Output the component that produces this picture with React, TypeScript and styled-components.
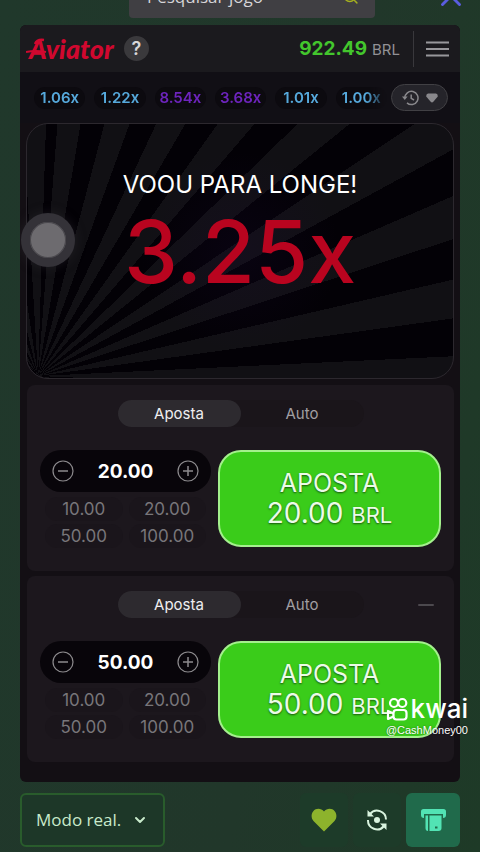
import React, { useState } from "react";
import styled, { createGlobalStyle } from "styled-components";
import { X, Search, ChevronDown } from "lucide-react";

const GlobalStyle = createGlobalStyle`
  *, *::before, *::after { box-sizing: border-box; }
  body {
    margin: 0;
    background: #20382a;
    font-family: Inter, "Liberation Sans", sans-serif;
    color: #fff;
  }
  button, input, select { font: inherit; color: inherit; }
  button { border: 0; padding: 0; background: none; cursor: pointer; }
`;

const Page = styled.div`
  position: relative;
  min-height: 100vh;
  overflow: hidden;
  display: flex;
  flex-direction: column;
  background: linear-gradient(100deg, #20382b, #21372a 60%, #1e3a27);
`;

const TopBar = styled.header`
  display: grid;
  grid-template-columns: 109px minmax(0, 1fr) 85px;
  align-content: end;
  align-items: center;
  height: 18px;
  margin: 0 20px 7px;
`;

const SearchBox = styled.label`
  grid-column: 2;
  display: flex;
  align-items: center;
  height: 44px;
  padding: 0 16px 0 18px;
  border-radius: 4px;
  background: #403f43;
  color: #a5b01f;
`;

const SearchInput = styled.input`
  flex: 1;
  min-width: 0;
  border: 0;
  padding: 0;
  background: none;
  font-family: "Open Sans", sans-serif;
  font-size: 17px;
  outline: 0;
  &::placeholder { color: #d6d5d8; opacity: 1; }
`;

const CloseButton = styled.button`
  justify-self: end;
  display: flex;
  margin-right: -8px;
  color: #5a5de0;
`;

const Game = styled.main`
  margin: 0 20px;
  padding-bottom: 20px;
  border-radius: 6px;
  background: #130f14;
  overflow: hidden;
`;

const GameHeader = styled.div`
  display: flex;
  align-items: center;
  height: 47px;
  padding: 0 11px 0 6px;
  background: #1b1a1e;
`;

const Logo = styled.h1`
  display: flex;
  align-items: center;
  position: relative;
  margin: 0;
  width: 88px;
  color: #d1082f;
  font-family: Lato, sans-serif;
  font-weight: 900;
  font-style: italic;
  font-size: 27px;
  line-height: 32px;
  padding-left: 3px;
`;

const LogoSwash = styled.svg`
  position: absolute;
  left: 0;
  top: 0;
`;

const HelpButton = styled.button`
  width: 25px;
  height: 25px;
  margin-left: 10px;
  border-radius: 50%;
  background: #3a393c;
  color: #d8d7d9;
  font-size: 18px;
  font-weight: 600;
  line-height: 24px;
`;

const Balance = styled.div`
  display: flex;
  align-items: baseline;
  gap: 5px;
  margin-left: auto;
  color: #929195;
  font-size: 15px;
`;

const BalanceAmount = styled.strong`
  color: #43c62d;
  font-size: 19px;
  font-weight: 700;
`;

const MenuButton = styled.button`
  display: flex;
  align-items: center;
  height: 36px;
  margin-left: 13px;
  padding-left: 12px;
  border-left: 1px solid #39383c;
  color: #98979b;
`;

const HistoryRow = styled.div`
  display: flex;
  align-items: center;
  gap: 4px;
  height: 51px;
  padding: 0 12px 0 14px;
  background: #110f15;
`;

const Multipliers = styled.ol`
  flex: 1;
  display: grid;
  grid-template-columns: repeat(6, 1fr);
  gap: 9px;
  margin: 0;
  padding: 0;
  list-style: none;
  mask-image: linear-gradient(90deg, #000 94%, transparent);
`;

const Multiplier = styled.li<{ $high?: boolean }>`
  display: flex;
  justify-content: center;
  border-radius: 11px;
  background: #0c0a0f;
  color: ${(p) => (p.$high ? "#6d24bd" : "#56a9dc")};
  font-size: 15px;
  font-weight: 600;
  line-height: 22px;
`;

const HistoryButton = styled.button`
  display: flex;
  align-items: center;
  justify-content: center;
  gap: 7px;
  width: 57px;
  height: 27px;
  border: 1px solid #414044;
  border-radius: 14px;
  background: #25242a;
  color: #89888c;
`;

const Stage = styled.section`
  display: flex;
  flex-direction: column;
  align-items: center;
  position: relative;
  height: 256px;
  margin: 0 6px;
  padding-top: 43px;
  border: 1px solid #2c282e;
  border-radius: 22px;
  background:
    radial-gradient(circle at 50% 50%, rgba(30, 10, 60, 0.2), transparent 40%),
    repeating-conic-gradient(from 4.4deg at 11px 252px, #111014 0 5.18deg, #030106 5.18deg 10.36deg);
`;

const StageTitle = styled.p`
  margin: 0;
  font-size: 24px;
  line-height: 36px;
`;

const StageValue = styled.p`
  margin: 0;
  color: #b9041f;
  font-size: 86px;
  font-weight: 500;
  line-height: 98px;
`;

const TouchDot = styled.button`
  position: absolute;
  left: -6px;
  top: 89px;
  width: 54px;
  height: 54px;
  border: 9px solid #343238;
  border-radius: 50%;
  background: #6d6b6f;
  box-shadow: inset 0 0 0 1px #4b494e, 0 0 12px rgba(60, 58, 64, 0.35);
`;

const BetPanel = styled.section`
  margin: 6px 6px 0 7px;
  padding: 15px 13px 23px;
  border-radius: 8px;
  background: #1c171d;
  & + & { margin-top: 5px; }
`;

const PanelHead = styled.div`
  display: grid;
  grid-template-columns: 1fr 246px 1fr;
  align-items: center;
  margin-bottom: 23px;
`;

const Tabs = styled.div`
  grid-column: 2;
  display: grid;
  grid-template-columns: 1fr 1fr;
  border-radius: 14px;
  background: #1a151a;
`;

const Tab = styled.button<{ $active?: boolean }>`
  height: 27px;
  border-radius: 14px;
  background: ${(p) => (p.$active ? "#2d2a2f" : "transparent")};
  color: ${(p) => (p.$active ? "#efeef0" : "#a19fa2")};
  font-size: 15px;
`;

const CollapseButton = styled.button`
  justify-self: end;
  display: flex;
  align-items: center;
  height: 27px;
  margin-right: 7px;
  color: #4c494e;
`;

const PanelBody = styled.div`
  display: grid;
  grid-template-columns: minmax(0, 171fr) minmax(0, 223fr);
  align-items: start;
  gap: 7px;
`;

const StakeColumn = styled.div`
  display: flex;
  flex-direction: column;
  gap: 5px;
`;

const Stepper = styled.div`
  display: flex;
  align-items: center;
  height: 42px;
  padding: 0 12px;
  border-radius: 21px;
  background: #08050a;
  color: #8d8b8e;
`;

const StepButton = styled.button`
  display: flex;
`;

const StakeInput = styled.input`
  flex: 1;
  min-width: 0;
  border: 0;
  padding: 0;
  background: none;
  outline: 0;
  color: #fff;
  text-align: center;
  font-size: 19px;
  font-weight: 700;
`;

const QuickStakes = styled.div`
  display: grid;
  grid-template-columns: 1fr 1fr;
  gap: 3px 6px;
  padding: 0 5px;
`;

const QuickStake = styled.button`
  height: 24px;
  border-radius: 12px;
  background: #1a151b;
  color: #78767a;
  font-size: 17px;
  line-height: 24px;
`;

const BetButton = styled.button`
  display: flex;
  flex-direction: column;
  align-items: center;
  justify-content: center;
  height: 97px;
  border: 2px solid #a4f08d;
  border-radius: 23px;
  background: #3acc1a;
  color: #ecfbe8;
  font-size: 25px;
  line-height: 30px;
  text-shadow: 0 1px 2px rgba(0, 0, 0, 0.6);
`;

const BetAmount = styled.span`
  font-size: 28px;
`;

const BetCurrency = styled.span`
  font-size: 22px;
`;

const Footer = styled.footer`
  display: flex;
  align-items: center;
  gap: 5px;
  margin: 11px 20px 5px;
`;

const ModeField = styled.label`
  display: flex;
  align-items: center;
  position: relative;
  width: 145px;
  margin-right: auto;
  color: #c8eacb;
`;

const ModeSelect = styled.select`
  appearance: none;
  width: 100%;
  height: 54px;
  padding: 0 14px 2px;
  border: 2px solid #295c2c;
  border-radius: 6px;
  background: #1d3728;
  font-family: "Open Sans", sans-serif;
  font-size: 17px;
`;

const ModeArrow = styled(ChevronDown)`
  position: absolute;
  right: 17px;
  pointer-events: none;
`;

const ActionButton = styled.button<{ $accent?: boolean }>`
  display: flex;
  align-items: center;
  justify-content: center;
  width: ${(p) => (p.$accent ? 54 : 48)}px;
  height: 54px;
  border-radius: 6px;
  background: ${(p) => (p.$accent ? "#206a4b" : "#1d3b29")};
`;

const Watermark = styled.div`
  position: absolute;
  right: 12px;
  top: 695px;
  display: flex;
  flex-direction: column;
  align-items: flex-end;
  pointer-events: none;
`;

const WatermarkBrand = styled.div`
  display: flex;
  align-items: center;
  gap: 3px;
  font-size: 26px;
  font-weight: 500;
  line-height: 28px;
`;

const WatermarkUser = styled.div`
  font-family: "Liberation Sans", sans-serif;
  font-size: 11px;
  line-height: 14px;
  text-shadow: 0 0 2px rgba(0, 0, 0, 0.5);
`;

const MULTIPLIERS = ["1.06x", "1.22x", "8.54x", "3.68x", "1.01x", "1.00x"];
const QUICK_STAKES = [10, 20, 50, 100];

const StepIcon = ({ plus }: { plus?: boolean }) => (
  <svg width="22" height="22" viewBox="0 0 22 22" fill="none" stroke="currentColor">
    <circle cx="11" cy="11" r="10" strokeWidth="1.2" />
    <path d={plus ? "M6 11h10M11 6v10" : "M6 11h10"} strokeWidth="1.5" />
  </svg>
);

function Bet({ label, initial, collapsible }: { label: string; initial: number; collapsible?: boolean }) {
  const [stake, setStake] = useState(initial);
  const [auto, setAuto] = useState(false);
  return (
    <BetPanel aria-label={label}>
      <PanelHead>
        <Tabs role="tablist">
          <Tab role="tab" aria-selected={!auto} $active={!auto} onClick={() => setAuto(false)}>Aposta</Tab>
          <Tab role="tab" aria-selected={auto} $active={auto} onClick={() => setAuto(true)}>Auto</Tab>
        </Tabs>
        {collapsible && (
          <CollapseButton aria-label="Remover">
            <svg width="16" height="4" viewBox="0 0 16 4"><rect y="1" width="16" height="2" rx="1" fill="currentColor" /></svg>
          </CollapseButton>
        )}
      </PanelHead>
      <PanelBody>
        <StakeColumn>
          <Stepper>
            <StepButton aria-label="Diminuir" onClick={() => setStake(Math.max(1, stake - 1))}><StepIcon /></StepButton>
            <StakeInput
              aria-label="Valor"
              inputMode="decimal"
              value={stake.toFixed(2)}
              onChange={(e) => setStake(Number(e.target.value) || 0)}
            />
            <StepButton aria-label="Aumentar" onClick={() => setStake(stake + 1)}><StepIcon plus /></StepButton>
          </Stepper>
          <QuickStakes>
            {QUICK_STAKES.map((q) => (
              <QuickStake key={q} onClick={() => setStake(q)}>{q.toFixed(2)}</QuickStake>
            ))}
          </QuickStakes>
        </StakeColumn>
        <BetButton>
          <span>APOSTA</span>
          <BetAmount>{stake.toFixed(2)} <BetCurrency>BRL</BetCurrency></BetAmount>
        </BetButton>
      </PanelBody>
    </BetPanel>
  );
}

export default function App() {
  return (
    <Page>
      <GlobalStyle />
      <TopBar>
        <SearchBox>
          <SearchInput type="text" aria-label="Pesquisar jogo" placeholder="Pesquisar jogo" />
          <Search size={17} strokeWidth={2} />
        </SearchBox>
        <CloseButton aria-label="Fechar"><X size={34} strokeWidth={2} /></CloseButton>
      </TopBar>

      <Game>
        <GameHeader>
          <Logo>
            <LogoSwash width="24" height="32" viewBox="0 0 24 32" fill="none" stroke="currentColor">
              <path d="M0 19Q10 17 20 19" strokeWidth="2" />
              <path d="M9 11Q11 6 18 7" strokeWidth="2.5" />
            </LogoSwash>
            Aviator
          </Logo>
          <HelpButton aria-label="Ajuda">?</HelpButton>
          <Balance><BalanceAmount>922.49</BalanceAmount> BRL</Balance>
          <MenuButton aria-label="Menu">
            <svg width="23" height="16" viewBox="0 0 23 16" stroke="currentColor" strokeWidth="2">
              <path d="M0 1.5h23M0 8h23M0 14.5h23" />
            </svg>
          </MenuButton>
        </GameHeader>

        <HistoryRow>
          <Multipliers>
            {MULTIPLIERS.map((m) => (
              <Multiplier key={m} $high={parseFloat(m) >= 2}>{m}</Multiplier>
            ))}
          </Multipliers>
          <HistoryButton aria-label="Histórico">
            <svg width="17" height="16" viewBox="0 0 17 16" fill="none" stroke="currentColor" strokeWidth="1.5">
              <path d="M2.8 8A6.6 6.6 0 1 1 5 12.9" />
              <path d="M9.2 4.5V8.3l2.8 1.7" />
              <path d="M0 6.5h5.6L2.8 10z" fill="currentColor" stroke="none" />
            </svg>
            <svg width="12" height="10" viewBox="0 0 12 10" fill="currentColor">
              <path d="M2 0.5h8Q12 1 11.8 3.5L7.3 8.8Q6 10 4.7 8.8L0.2 3.5Q0 1 2 0.5z" />
            </svg>
          </HistoryButton>
        </HistoryRow>

        <Stage>
          <StageTitle>VOOU PARA LONGE!</StageTitle>
          <StageValue>3.25x</StageValue>
          <TouchDot aria-label="Toque assistivo" />
        </Stage>

        <Bet label="Aposta 1" initial={20} />
        <Bet label="Aposta 2" initial={50} collapsible />
      </Game>

      <Footer>
        <ModeField>
          <ModeSelect aria-label="Modo de jogo">
            <option>Modo real.</option>
          </ModeSelect>
          <ModeArrow size={16} strokeWidth={3} />
        </ModeField>
        <ActionButton aria-label="Favorito">
          <svg width="26" height="24" viewBox="0 0 26 24" fill="#8db32c">
            <path d="M13 23.5 2.5 13C0 10.3 0 6 2.3 3.2 5-.2 10.3 0 13 3.6 15.7 0 21-.2 23.7 3.2 26 6 26 10.3 23.5 13z" />
          </svg>
        </ActionButton>
        <ActionButton aria-label="Atualizar">
          <svg width="22" height="22" viewBox="0 0 22 22" fill="none" stroke="#d9f4df" strokeWidth="2">
            <path d="M4 5A9 9 0 0 1 20 10.5" />
            <path d="M18 17A9 9 0 0 1 2 11" />
            <path d="M1.5 1v6.5H8zM20.5 21v-6.5H14z" fill="#d9f4df" stroke="none" />
            <circle cx="11" cy="11" r="3" fill="#d9f4df" stroke="none" />
          </svg>
        </ActionButton>
        <ActionButton $accent aria-label="Depósito">
          <svg width="25" height="22" viewBox="0 0 25 22" fill="#52e3b4">
            <path d="M2.5 0h20A2.5 2.5 0 0 1 25 2.5V6q0 3-3 3V5H3v4Q0 9 0 6V2.5A2.5 2.5 0 0 1 2.5 0z" />
            <path d="M4.5 6.5H7V22Q4.5 22 4.5 19z" />
            <path d="M8.5 6.5h12V19q0 3-3 3h-9z" />
            <path d="M14 17.5h2.5v2H14z" fill="#206a4b" />
          </svg>
        </ActionButton>
      </Footer>

      <Watermark>
        <WatermarkBrand>
          <svg width="22" height="24" viewBox="0 0 22 24" fill="none" stroke="#fff" strokeWidth="2.2">
            <circle cx="8" cy="6" r="4" />
            <circle cx="16.3" cy="6" r="4" />
            <rect x="7.5" y="13" width="13" height="9.5" rx="3" />
            <path d="M7.5 16.5 2 14v8l5.5-2.5" strokeLinejoin="round" />
          </svg>
          kwai
        </WatermarkBrand>
        <WatermarkUser>@CashMoney00</WatermarkUser>
      </Watermark>
    </Page>
  );
}
